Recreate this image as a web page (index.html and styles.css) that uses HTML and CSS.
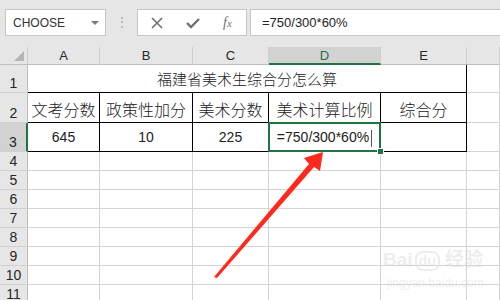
FILE: index.html
```html
<!DOCTYPE html>
<html lang="zh-CN">
<head>
  <meta charset="UTF-8">
  <title>福建省美术生综合分怎么算</title>
  <link rel="stylesheet" href="styles.css">
</head>
<body>
  <div class="page">
    <div class="toolbar">
      <div class="name-box">
        <span>CHOOSE</span>
        <span class="caret"></span>
      </div>
      <div class="grip">⋮</div>
      <div class="fx-buttons">
        <svg class="btn" width="12" height="12" viewBox="0 0 12 12">
          <path d="M1 1 L11 11 M11 1 L1 11" stroke="#707070" stroke-width="1.6" fill="none"/>
        </svg>
        <svg class="btn" width="14" height="12" viewBox="0 0 14 12">
          <path d="M1 6 L5 10 L13 2" stroke="#707070" stroke-width="2.4" fill="none"/>
        </svg>
        <span class="btn fx"><i>f</i><i>x</i></span>
      </div>
      <div class="formula-box">=750/300*60%</div>
    </div>

    <div class="sheet">
      <!-- column headers -->
      <div class="corner"><span class="tri"></span></div>
      <div class="col-head">A</div>
      <div class="col-head">B</div>
      <div class="col-head">C</div>
      <div class="col-head active">D</div>
      <div class="col-head">E</div>
      <div class="col-head"></div>

      <!-- row 1 -->
      <div class="row-head">1</div>
      <div class="cell tb title">福建省美术生综合分怎么算</div>
      <div class="cell"></div>

      <!-- row 2 -->
      <div class="row-head">2</div>
      <div class="cell tb cn">文考分数</div>
      <div class="cell tb cn">政策性加分</div>
      <div class="cell tb cn">美术分数</div>
      <div class="cell tb cn">美术计算比例</div>
      <div class="cell tb cn">综合分</div>
      <div class="cell"></div>

      <!-- row 3 -->
      <div class="row-head active">3</div>
      <div class="cell tb num">645</div>
      <div class="cell tb num">10</div>
      <div class="cell tb num">225</div>
      <div class="cell tb num selected">=750/300*60%<span class="cursor"></span></div>
      <div class="cell tb num"></div>
      <div class="cell"></div>

      <div class="row-head">4</div><div class="cell"></div><div class="cell"></div><div class="cell"></div><div class="cell"></div><div class="cell"></div><div class="cell"></div>
      <div class="row-head">5</div><div class="cell"></div><div class="cell"></div><div class="cell"></div><div class="cell"></div><div class="cell"></div><div class="cell"></div>
      <div class="row-head">6</div><div class="cell"></div><div class="cell"></div><div class="cell"></div><div class="cell"></div><div class="cell"></div><div class="cell"></div>
      <div class="row-head">7</div><div class="cell"></div><div class="cell"></div><div class="cell"></div><div class="cell"></div><div class="cell"></div><div class="cell"></div>
      <div class="row-head">8</div><div class="cell"></div><div class="cell"></div><div class="cell"></div><div class="cell"></div><div class="cell"></div><div class="cell"></div>
      <div class="row-head">9</div><div class="cell"></div><div class="cell"></div><div class="cell"></div><div class="cell"></div><div class="cell"></div><div class="cell"></div>
      <div class="row-head">10</div><div class="cell"></div><div class="cell"></div><div class="cell"></div><div class="cell"></div><div class="cell"></div><div class="cell"></div>
      <div class="row-head">11</div><div class="cell"></div><div class="cell"></div><div class="cell"></div><div class="cell"></div><div class="cell"></div><div class="cell"></div>
    </div>

    <!-- red arrow pointing at D3 -->
    <svg class="arrow" width="500" height="300" viewBox="0 0 500 300">
      <polygon fill="#ff2a1c" points="214,277 309,164 304,158 323,152 320,171 314,167 217,278"/>
    </svg>

    <div class="watermark">
      <div class="wm-logo">Bai<span class="wm-du">du</span> 经验</div>
      <div class="wm-url">jingyan.baidu.com</div>
    </div>
  </div>
</body>
</html>
```

FILE: styles.css
```css
/* General */
body {
  margin: 0;
  font-family: 'Liberation Sans', Arial, 'Noto Sans CJK SC', sans-serif;
  color: #222;
  background: #fff;
  overflow: hidden;
}

.page {
  position: relative;
  width: 500px;
  height: 300px;
  overflow: hidden;
}

/* Formula bar */
.toolbar {
  height: 47px;
  box-sizing: border-box;
  padding-top: 9px;
  background: #e6e6e6;
  display: flex;
  align-items: flex-start;
}

.name-box,
.fx-buttons,
.formula-box {
  height: 27px;
  box-sizing: border-box;
  background: #fff;
  border: 1px solid #c6c6c6;
  display: flex;
  align-items: center;
}

.name-box {
  margin-left: 5px;
  width: 101px;
  padding: 0 6px 0 7px;
  justify-content: space-between;
  font-size: 12px;
  color: #333;
}

.caret {
  width: 0;
  height: 0;
  border-left: 4px solid transparent;
  border-right: 4px solid transparent;
  border-top: 4px solid #7a7a7a;
}

.grip {
  width: 31px;
  text-align: center;
  line-height: 27px;
  font-size: 14px;
  color: #b0b0b0;
}

.fx-buttons {
  width: 110px;
  padding-left: 13px;
  gap: 23px;
  color: #707070;
}

.btn.fx {
  font-family: 'Liberation Serif', serif;
  font-style: italic;
  font-size: 14px;
  margin-left: 0;
}

.btn.fx i:last-child {
  font-size: 11px;
}

.formula-box {
  margin-left: 3px;
  flex: 1;
  border-right: 0;
  padding-left: 11px;
  font-size: 13px;
  color: #222;
}

/* Sheet grid */
.sheet {
  display: grid;
  grid-template-columns: 28px 72px 93px 76px 112px 86px 1fr;
  grid-template-rows: 18px 28px 30px 29px repeat(8, 19px);
}

.sheet > div {
  box-sizing: border-box;
  border-right: 1px solid #d4d4d4;
  border-bottom: 1px solid #d4d4d4;
}

.corner {
  position: relative;
  background: #e6e6e6;
}

.corner .tri {
  position: absolute;
  right: 3px;
  bottom: 3px;
  width: 0;
  height: 0;
  border-left: 10px solid transparent;
  border-bottom: 10px solid #b5b5b5;
}

.col-head {
  background: #e6e6e6;
  display: flex;
  align-items: center;
  justify-content: center;
  font-size: 13px;
  color: #262626;
}

.sheet > .col-head,
.sheet > .corner {
  border-bottom-color: #bdbdbd;
  border-right-color: #cfcfcf;
}

.col-head.active {
  background: #d2d2d2;
  color: #217346;
  border-bottom: 2px solid #217346;
}

.row-head {
  background: #e6e6e6;
  display: flex;
  align-items: flex-end;
  justify-content: center;
  padding-bottom: 1px;
  font-size: 14px;
  color: #262626;
}

.sheet > .row-head {
  border-right-color: #bdbdbd;
  border-bottom-color: #d0d0d0;
}

.sheet > .row-head.active {
  background: #d2d2d2;
  border-right: 2px solid #217346;
}

.cell {
  display: flex;
  align-items: flex-end;
  justify-content: center;
  line-height: 1;
}

.sheet > .cell.tb {
  border-right-color: #000;
  border-bottom-color: #000;
}

.title {
  grid-column: span 5;
  font-size: 15px;
  padding-bottom: 6px;
  font-family: 'Noto Sans CJK SC', sans-serif;
  font-weight: 300;
}

.cn {
  font-size: 16px;
  padding-bottom: 5px;
  font-family: 'Noto Sans CJK SC', sans-serif;
  font-weight: 300;
}

.num {
  font-size: 14px;
  padding-bottom: 7px;
}

.selected {
  position: relative;
}

.selected::after {
  content: '';
  position: absolute;
  left: -1px;
  top: -1px;
  right: -1px;
  bottom: -1px;
  border: 2px solid #217346;
}

.selected::before {
  content: '';
  position: absolute;
  right: -4px;
  bottom: -4px;
  width: 5px;
  height: 5px;
  background: #217346;
  border: 1px solid #fff;
  z-index: 1;
}

.cursor {
  width: 1px;
  height: 17px;
  background: #555;
  margin-left: 2px;
  margin-bottom: -3px;
}

/* Overlays */
.arrow {
  position: absolute;
  left: 0;
  top: 0;
  pointer-events: none;
}

.watermark {
  position: absolute;
  left: 383px;
  top: 249px;
  color: rgba(215, 215, 215, 0.45);
  pointer-events: none;
}

.wm-logo {
  font-size: 19px;
  font-weight: bold;
  font-family: 'Liberation Sans', 'Noto Sans CJK SC', sans-serif;
  line-height: 22px;
}

.wm-du {
  font-size: 14px;
  margin-left: 2px;
  padding: 0 2px;
  border: 2px solid rgba(215, 215, 215, 0.45);
  border-radius: 8px;
}

.wm-url {
  font-size: 12px;
  margin-top: 4px;
  margin-left: 4px;
}
```
